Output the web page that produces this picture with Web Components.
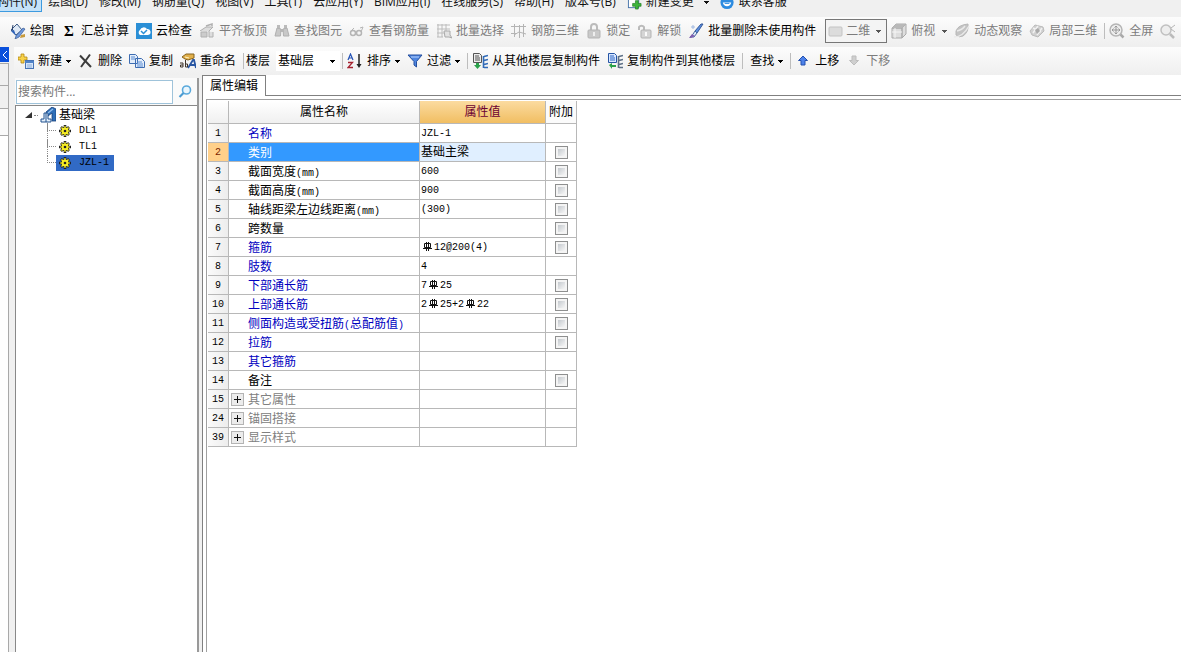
<!DOCTYPE html>
<html lang="zh-CN">
<head>
<meta charset="utf-8">
<title>属性编辑</title>
<style>
  body { margin: 0; background: #f0f0f0; color: #000; font: 12px/16px "Open Sans", "Noto Sans CJK SC", sans-serif; overflow-x: hidden; }
</style>
</head>
<body>
<rebar-app></rebar-app>
<script>
const ICONS = {
  paint: '<path d="M1 7 7 1l5 6-6 5z" fill="#dfe9f5" stroke="#3b5a86"/><path d="M3 2q-2 4 1 8" fill="none" stroke="#27406b"/><path d="M1 8 6 13 4 7z" fill="#2f62b8"/><path d="M6 13 13 5l2 1-6 8-4 2z" fill="#6f9ae0" stroke="#36588f" stroke-width=".7"/><path d="M11 12l4-1v3l-5 1z" fill="#c79a3c"/>',
  cloud: '<rect x="0" y="0" width="16" height="16" fill="#2b8fd6"/><path d="M4 12a3 3 0 0 1 0-5 4 4 0 0 1 7-1 3 3 0 0 1 1 6z" fill="#fff"/><path d="m5 8 2.500 2.500L11 7" fill="none" stroke="#2b8fd6" stroke-width="1.500"/>',
  slab: '<path d="M1 8 7 4h7l-4 4v6h4V9" fill="#ddd" stroke="#b0b0b0"/><path d="M2 9h6v5H2z" fill="#ccc" stroke="#b0b0b0"/><path d="M7 3l6-2v2" fill="none" stroke="#b0b0b0" stroke-width="1.500"/>',
  binoc: '<path d="M3 2h3v4H3zM10 2h3v4h-3zM6 6h4v3H6z" fill="#bbb"/><path d="M3 5 1 13h5.500L7 6zM13 5l2 8H9.500L9 6z" fill="#c8c8c8" stroke="#b0b0b0"/>',
  glasses: '<circle cx="4" cy="10" r="2.500" fill="none" stroke="#b5b5b5" stroke-width="1.500"/><circle cx="10" cy="10" r="2.500" fill="none" stroke="#b5b5b5" stroke-width="1.500"/><path d="M2 8 5 5M12 9l2-5-3 1" fill="none" stroke="#b5b5b5"/>',
  batch: '<path d="M1 2h13M1 6h13M1 10h8M1 14h6M2 1v13M6 1v13M10 1v7" fill="none" stroke="#bcbcbc"/><path d="M8 8h6v4l2 3-3-1H9z" fill="#e2e2e2" stroke="#aaa"/>',
  grid: '<path d="M0 3.500h15M0 10.500h5M3.500 1v13M8.500 2v13M12.500 1v13M3 12l5-3 7 2" fill="none" stroke="#b4b4b4"/>',
  lock: '<path d="M5 7V4a3 3 0 0 1 6 0v3" fill="none" stroke="#bbb" stroke-width="2"/><rect x="2" y="7" width="12" height="8" rx="1" fill="#c9c9c9" stroke="#b3b3b3"/><path d="M8 9v4" stroke="#eee" stroke-width="2"/>',
  unlock: '<path d="M2 7V4a3 3 0 0 1 5 0v3" fill="none" stroke="#bbb" stroke-width="2"/><rect x="4" y="7" width="10" height="8" rx="1" fill="#d5d5d5" stroke="#b3b3b3"/><path d="M9 9v4" stroke="#fafafa" stroke-width="2"/>',
  brush: '<path d="m7 8 6-7h2l-6 9z" fill="#5b8fe0" stroke="#35599a"/><path d="M7 8l2 2-3 4H2q3-2 5-6z" fill="#dfe8f8" stroke="#44679e"/><path d="M4 11l3 2-4 2H1z" fill="#8060b0"/><path d="M5 2v4M3 4h4" stroke="#9fb8e0"/>',
  flat: '<rect x="1" y="4" width="13" height="9" rx="1" fill="#dcdcdc" stroke="#c4c4c4"/>',
  cube: '<path d="M1 5 5 1h10l-4 4zM1 5h10v10H1zM11 5l4-4v10l-4 4z" fill="#dedede" stroke="#aaa"/><path d="M1 5h10l4-4H5z" fill="#b9b9b9"/><path d="M4 5v10M1 9h10" stroke="#f5f5f5"/>',
  orbit: '<path d="M2 8Q4 2 14 1q1 8-5 12-4 2-7-1z" fill="#c4c4c4" stroke="#b8b8b8"/><path d="M0 14q9 0 15-11M3 8q5-1 8-5" fill="none" stroke="#eaeaea" stroke-width="1.500"/>',
  local: '<path d="m1 8 5-6 8 2 1 4-6 6-6-2z" fill="#d0d0d0" stroke="#bbb"/><path d="M4 10l5-7M8 12l5-7M4 5l8 4" fill="none" stroke="#f2f2f2" stroke-width="1.500"/><path d="m6 7 3-2 2 3-3 3z" fill="#aaa"/>',
  full: '<circle cx="7" cy="7" r="6" fill="#eee" stroke="#b5b5b5" stroke-width="1.500"/><path d="M7 3v8M3 7h8M5.500 4.500 7 3l1.500 1.500M5.500 9.500 7 11l1.500-1.500M4.500 5.500 3 7l1.500 1.500M9.500 5.500 11 7 9.500 8.500" fill="none" stroke="#999"/><path d="m11.500 11.500 3 3" stroke="#aaa" stroke-width="2.500"/>',
  zoomout: '<circle cx="6" cy="7" r="5" fill="#eee" stroke="#c0c0c0" stroke-width="1.500"/><path d="m10 11 4 4" stroke="#bbb" stroke-width="2.500"/><path d="M11 5l4-3M11 6l4 3" stroke="#b5b5b5"/>',
  add: '<path d="M3 1h3v3h3v3H6v3H3V7H0V4h3z" fill="#f8d24a" stroke="#b28813" stroke-width=".8"/><rect x="7.500" y="7.500" width="8" height="8" fill="#d6e6fb" stroke="#4673b5"/><path d="M7 8h9v2H7z" fill="#4f82c8"/><path d="M9 12h5M9 14h5" stroke="#8cadd8"/>',
  del: '<path d="M2 2.500 13 14M12 1.500 3 14" stroke="#3c3c3c" stroke-width="2" fill="none"/>',
  copy: '<path d="M.5 1.500h6l2 2v7h-8zM6.500 5.500h6l3 3v6h-9z" fill="#e3edfa" stroke="#3e6db2"/><path d="M2 4h4M2 6h4M8 9h5M8 11h6M8 13h6" stroke="#5a8cd2"/>',
  rename: '<path d="M2 4 6 1h8v4l-6 2-3-1z" fill="#e2b04a" stroke="#866421"/><path d="M5 4l4 1" stroke="#fff3c4"/><path d="m8 15 5-8h1l2 8M10 12h5" fill="none" stroke="#2957a3" stroke-width="1.800"/><path d="M0 10h3v4H.5v-2H3M5.500 7v7h2v-3h-2" fill="none" stroke="#41352a"/>',
  sort: '<path d="m1 7 2.500-6L6 7M2 5h3" fill="none" stroke="#2452b5" stroke-width="1.200"/><path d="M1 9.500h4.500L1 14.500h5" fill="none" stroke="#a52330" stroke-width="1.300"/><path d="M12 1v12" stroke="#222" stroke-width="1.500"/><path d="M9.500 11h5L12 15z" fill="#222"/>',
  filter: '<path d="M1 2h14L9.500 8.500V14L7 12V8.500z" fill="#4f86e0" stroke="#244f9e"/><path d="M4 4h8" stroke="#b8d3ff"/>',
  from: '<path d="M1.500.5h6l2 2v7h-8z" fill="#ececec" stroke="#555"/><path d="M3 3h4M3 5h5M3 7h5" stroke="#555"/><path d="M4 10h3v2h2l-3.500 4L2 12h2z" fill="#2aa04a"/><path d="M11.500 3v12M16 2.500l-4 1M16 6.500l-4 1M16 10.500l-4 1M16 14.500h-4" fill="none" stroke="#316bb8" stroke-width="1.600"/>',
  to: '<path d="M1.500.5h6l2 2v7h-8z" fill="#d9e8ff" stroke="#2655a5"/><path d="M3 3h4M3 5h5M3 7h5" stroke="#2c64c4"/><path d="M2 12l3-2v2h4v2H5v2z" fill="#2aa04a"/><path d="M11.500 3v12M16 2.500l-4 1M16 6.500l-4 1M16 10.500l-4 1M16 14.500h-4" fill="none" stroke="#5c6f86" stroke-width="1.600"/>',
  up: '<path d="m8 3 4.500 4.500H10V12H6V7.500H3.500z" fill="#4d82ea" stroke="#2450ae"/>',
  down: '<path d="m8 12 4.500-4.500H10V3H6v4.500H3.500z" fill="#cfcfcf" stroke="#bdbdbd"/>',
  change: '<rect x="1.500" y="1.500" width="11" height="12" fill="#fff" stroke="#4672a8"/><path d="M9 6h3v3h3v3h-3v3H9v-3H6V9h3z" fill="#3eb53a" stroke="#1f7a20" stroke-width=".7"/>',
  service: '<circle cx="7.500" cy="8" r="7" fill="#2c8be0"/><path d="M3 8h9q-1 4-4.500 4T3 8" fill="#fff"/><path d="M5 9h5" stroke="#2c8be0"/>',
  search: '<circle cx="9.500" cy="6" r="4" fill="#eaf6fd" stroke="#5aa9dc" stroke-width="1.600"/><path d="m6.500 9-4 4" stroke="#4b9bd2" stroke-width="2.200"/>',
  beam: '<path d="M6 5 12 0l4 2v12h-4V6L8 9z" fill="#2f6fb8" stroke="#173f78" stroke-width=".8"/><path d="M4 6h4v6h3v3H1v-3h3z" fill="#e4f0fc" stroke="#22528f"/><path d="M6 6v9" stroke="#22528f"/><path d="m8 6 5-4" stroke="#91bfee" stroke-width="1.500"/>',
  gear: '<path d="M7 1v12M1 7h12M3 3l8 8M11 3l-8 8" stroke="#222" stroke-width="2.600"/><circle cx="7" cy="7" r="4" fill="#f7ee25" stroke="#222" stroke-width=".8"/><path d="M7 2v10M2 7h10M3.500 3.500l7 7M10.500 3.500l-7 7" stroke="#f7ee25" stroke-width="1.200"/><circle cx="7" cy="7" r="1.300" fill="#222"/>'
};
const svg = (name, size = 16, box = 16) => `<svg class="icon" width="${size}" height="${size}" viewBox="0 0 ${box} ${box}" aria-hidden="true">${ICONS[name]}</svg>`;
const ARROW = '<svg class="arrow" width="5" height="3" viewBox="0 0 5 3" aria-hidden="true"><path d="M0 0h5v1H4v1H3v1H2V2H1V1H0z" fill="currentColor"/></svg>';
const mono = s => s.replace(/[\x20-\x7e]+/g, '<span class="mono">$&</span>');
const MONO = '.mono { font: 10px/16px "Liberation Mono", monospace; white-space: pre; }';

class Base extends HTMLElement {
  connectedCallback() {
    if (this.shadowRoot) return;
    this.attachShadow({ mode: 'open' }).innerHTML = this.render();
  }
}

customElements.define('menu-item', class extends Base {
  render() {
    const icon = this.getAttribute('icon');
    return `<style>
      :host { display: block; flex: none; }
      button { display: flex; align-items: center; gap: 4px; height: 20px; padding: 0 4px; border: 1px solid transparent; background: none; font: inherit; color: #111; white-space: nowrap; }
      :host([active]) button { background: #c5e2f8; border-color: #3d9be0; }
      .arrow { margin-left: 6px; }
    </style><button type="button">${icon ? svg(icon, 15) : ''}<slot></slot>${this.hasAttribute('menu') ? ARROW : ''}</button>`;
  }
});

customElements.define('menu-strip', class extends Base {
  render() {
    return `<style>
      :host { display: block; height: 17px; overflow: hidden; background: #f0f0f0; }
      nav { display: flex; gap: 1px; margin: -8px 0 0 -8px; }
    </style><nav><slot></slot></nav>`;
  }
});

customElements.define('tool-strip', class extends Base {
  render() {
    return `<style>
      :host { display: flex; align-items: center; height: 28px; overflow: hidden; background: linear-gradient(#fcfcfc, #efefef); }
      :host([primary]) { border-bottom: 2px solid #efefef; padding-left: 10px; }
      :host([secondary]) { padding-left: 4px; }
    </style><slot></slot>`;
  }
});

customElements.define('tool-item', class extends Base {
  render() {
    const icon = this.getAttribute('icon');
    return `<style>
      :host { display: block; flex: none; margin-right: 7px; }
      button { display: flex; align-items: center; gap: 4px; padding: 0; border: 0; background: none; font: inherit; color: #000; white-space: nowrap; }
      button:disabled { color: #7c7c7c; }
      .plain { padding-left: 3px; }
      .sum { width: 16px; font: bold 15px/16px "Liberation Serif", serif; text-align: center; }
      :host([wide]) .arrow { margin-left: 3px; color: #555; }
    </style><button type="button" class="${icon ? '' : 'plain'}"${this.hasAttribute('disabled') ? ' disabled' : ''}>${icon === 'sum' ? '<span class="sum">Σ</span>' : icon ? svg(icon) : ''}<slot></slot>${this.hasAttribute('menu') ? ARROW : ''}</button>`;
  }
});

customElements.define('tool-separator', class extends Base {
  render() {
    return `<style>
      :host { display: block; flex: none; width: 1px; height: 16px; margin-right: 4px; background: #bdbdbd; }
      :host([tight]) { margin-right: 2px; }
    </style>`;
  }
});

customElements.define('tool-select', class extends Base {
  render() {
    const icon = this.getAttribute('icon');
    return `<style>
      :host { display: block; flex: none; margin-right: 2px; }
      label { display: flex; align-items: center; gap: 6px; }
      .box { display: grid; grid-template-columns: auto 15px; align-items: center; box-sizing: border-box; width: 64px; height: 20px; background: #fff; }
      select { grid-area: 1 / 1 / 2 / 3; appearance: none; width: 100%; height: 16px; margin: 0; padding: 0 0 0 2px; border: 0; background: none; font: inherit; color: #000; opacity: 1; }
      .arrow { grid-area: 1 / 2; pointer-events: none; justify-self: center; }
      .icon { grid-area: 1 / 1; margin-left: 2px; }
      :host([framed]) { margin: 0 4px 0 2px; }
      :host([framed]) .box { width: 62px; height: 24px; border: 1px solid #777; background: #f4f4f4; color: #555; }
      :host([framed]) select { padding-left: 20px; color: #7c7c7c; }
    </style><label>${this.getAttribute('label') || ''}<span class="box">${icon ? svg(icon) : ''}<select aria-label="${this.getAttribute('name')}"${icon ? ' disabled' : ''}><option>${this.getAttribute('value')}</option></select>${ARROW}</span></label>`;
  }
});

customElements.define('side-rail', class extends Base {
  render() {
    return `<style>
      :host { display: flex; flex-direction: column; width: 9px; flex: none; }
      button { height: 15px; padding: 0; border: 0; background: #0a50dc; color: #fff; display: grid; place-items: center; }
      div { box-sizing: border-box; height: 23px; border: solid #a9a9a9; border-width: 0 1px 1px 0; }
      .first { margin-top: 1px; border-top-width: 1px; }
      .pale { height: 27px; background: #fafafa; }
      .fill { flex: 1; background: #fff; border-bottom: 0; }
    </style><button type="button" aria-label="收起"><svg width="6" height="8" viewBox="0 0 6 8"><path d="M5 0 1 4l4 4" fill="none" stroke="#fff"/></svg></button>
    <div class="first"></div><div></div><div class="pale"></div><div class="fill"></div>`;
  }
});

customElements.define('component-tree', class extends Base {
  render() {
    return `<style>
      ${MONO}
      :host { display: flex; flex-direction: column; box-sizing: border-box; width: 184px; flex: none; border-right: 2px solid #999; margin-top: 3px; }
      form { display: flex; align-items: center; gap: 4px; height: 27px; padding-left: 1px; background: #fafafa; }
      input { box-sizing: border-box; width: 157px; height: 24px; padding: 0 1px; border: 1px solid #9fc3da; background: #fff; font: inherit; color: #000; outline: 0; }
      input::placeholder { color: #777; opacity: 1; }
      form button { display: grid; padding: 0; border: 0; background: none; }
      .tree { flex: 1; border: solid #888; border-width: 1px 0 0 1px; background: #fff; padding: 1px 0 0 9px; }
      ul { list-style: none; margin: 0; padding: 0; }
      .row { display: flex; align-items: center; height: 16px; }
      .root .icon { margin: 0 3px 0 2px; }
      .dots { width: 4px; border-top: 1px dotted #888; margin-left: 2px; }
      .kids { margin-left: 22px; }
      .kids li { display: flex; align-items: center; height: 16px; }
      .kids li::before { content: ""; width: 9px; height: 8px; border: dotted #888; border-width: 0 0 1px 1px; align-self: flex-start; box-sizing: border-box; }
      .branch { display: flex; align-items: center; gap: 7px; height: 16px; padding: 0 5px 0 2px; }
      .kids li:not(:last-child) { background: repeating-linear-gradient(#888 0 1px, transparent 1px 2px) 0 0 / 1px 100% no-repeat; }
      .on { background: #316ac5; }
    </style>
    <form><input type="text" aria-label="搜索构件" placeholder="搜索构件..."><button type="button" aria-label="搜索">${svg('search')}</button></form>
    <div class="tree"><ul><li><div class="row root"><svg width="7" height="7" viewBox="0 0 7 7"><path d="M7 0v6H0z" fill="#333"/></svg><span class="dots"></span>${svg('beam')}<span>基础梁</span></div>
      <ul class="kids">${['DL1', 'TL1', 'JZL-1'].map((t, i) => `<li><span class="branch${i === 2 ? ' on' : ''}">${svg('gear', 14, 14)}${mono(t)}</span></li>`).join('')}</ul></li></ul></div>`;
  }
});

const REBAR = '<svg class="rebar" width="13" height="9" viewBox="0 0 13 9" role="img" aria-label="HRB400"><path d="M3.500 1.500h6v4h-6zM5.500 0v9M7.500 0v9M2 6.500h9" fill="none" stroke="#111"/></svg>';
const ROWS = [
  [1, '名称', 'JZL-1', 0, 'key'], [2, '类别', '基础主梁', 1, 'sel'], [3, '截面宽度(mm)', '600', 1], [4, '截面高度(mm)', '900', 1],
  [5, '轴线距梁左边线距离(mm)', '(300)', 1], [6, '跨数量', '', 1], [7, '箍筋', '#12@200(4)', 1, 'key'], [8, '肢数', '4', 0, 'key'],
  [9, '下部通长筋', '7#25', 1, 'key'], [10, '上部通长筋', '2#25+2#22', 1, 'key'], [11, '侧面构造或受扭筋(总配筋值)', '', 1, 'key'],
  [12, '拉筋', '', 1, 'key'], [13, '其它箍筋', '', 0, 'key'], [14, '备注', '', 1], [15, '其它属性', '', 0, 'group'],
  [24, '锚固搭接', '', 0, 'group'], [39, '显示样式', '', 0, 'group']
];

customElements.define('property-grid', class extends Base {
  render() {
    const rows = ROWS.map(([n, name, value, check, kind = '']) => `<tr class="${kind}"><th scope="row">${mono(String(n))}</th><td><div class="name">${kind === 'group' ? `<button type="button" aria-label="展开${name}"><svg width="9" height="9" viewBox="0 0 9 9"><path d="M4.500 1v7M1 4.500h7" stroke="#111"/></svg></button>` : ''}<span class="label">${mono(name)}</span></div></td><td class="value">${value.split('#').map(mono).join(REBAR)}</td><td class="check">${check ? `<input type="checkbox" aria-label="附加 ${name}">` : ''}</td></tr>`).join('');
    return `<style>
      ${MONO}
      :host { display: block; }
      table { border-collapse: separate; border-spacing: 0; table-layout: fixed; width: 369px; }
      th, td { box-sizing: border-box; height: 19px; padding: 0; border: solid #b8b8b8; border-width: 0 1px 1px 0; line-height: 16px; font-weight: normal; white-space: nowrap; overflow: hidden; vertical-align: middle; }
      thead th { height: 23px; background: linear-gradient(#fff, #f0f0f0); }
      thead .hot { background: linear-gradient(#fbdba0, #f1be62); color: #6b0032; }
      thead .last { background: #fbfbfb; }
      tbody th { background: linear-gradient(90deg, #fafafa, #ededed); }
      .name { display: grid; grid-template-columns: 19px auto; align-items: center; height: 18px; }
      .label { grid-column: 2; grid-row: 1; padding-top: 2px; }
      .label .mono { line-height: 0; }
      .value { padding-left: 1px; }
      .key .name { color: #0000c0; }
      .group .name { color: #808080; }
      .sel th { background: #ffd08a; color: #7a1f00; }
      .sel td { background: #3399ff; }
      .sel .name { color: #fff; }
      .sel .value { background: #e0efff; }
      .sel .check { background: #fff; }
      .check { text-align: center; line-height: 0; }
      input { appearance: none; box-sizing: border-box; width: 13px; height: 13px; margin: 0; border: 1px solid #8e8f8f; background: linear-gradient(135deg, #c4c9ce, #f6f6f6) content-box, #f4f4f4; padding: 2px; vertical-align: middle; }
      .name button { grid-column: 1; grid-row: 1; display: grid; place-items: center; box-sizing: border-box; width: 13px; height: 13px; margin-left: 2px; padding: 0; border: 1px solid #b4b4b4; background: #ececec; }
      .rebar { vertical-align: -1px; }
    </style><table><colgroup><col style="width:21px"><col style="width:191px"><col style="width:126px"><col style="width:31px"></colgroup>
      <thead><tr><th></th><th scope="col">属性名称</th><th scope="col" class="hot">属性值</th><th scope="col" class="last">附加</th></tr></thead><tbody>${rows}</tbody></table>`;
  }
});

customElements.define('tab-panel', class extends Base {
  render() {
    return `<style>
      :host { display: flex; flex-direction: column; flex: 1; min-width: 0; margin-left: 3px; background: #fff; }
      .tabs { display: flex; height: 21px; }
      button { box-sizing: border-box; width: 64px; padding: 0; border: solid #808080; border-width: 1px 1px 0 1px; background: #fff; font: inherit; color: #000; }
      .rest { flex: 1; border-bottom: 1px solid #808080; }
      .outer { flex: 1; display: flex; border-left: 1px solid #808080; padding: 3px 0 0 3px; }
      .inner { flex: 1; border: solid #a0a0a0; border-width: 1px 0 0 1px; padding: 1px; }
    </style><div class="tabs" role="tablist"><button type="button" role="tab" aria-selected="true">${this.getAttribute('label')}</button><span class="rest"></span></div>
    <div class="outer" role="tabpanel"><div class="inner"><slot></slot></div></div>`;
  }
});

customElements.define('rebar-app', class extends Base {
  render() {
    return `<style>
      :host { display: flex; flex-direction: column; min-height: 100vh; }
      main { flex: 1; display: flex; }
      .work { flex: 1; min-width: 0; display: flex; flex-direction: column; margin-left: 5px; }
      .split { flex: 1; display: flex; margin-left: 1px; }
    </style>
    <menu-strip><menu-item active>构件(N)</menu-item><menu-item>绘图(D)</menu-item><menu-item>修改(M)</menu-item><menu-item>钢筋量(Q)</menu-item><menu-item>视图(V)</menu-item><menu-item>工具(T)</menu-item><menu-item>云应用(Y)</menu-item><menu-item>BIM应用(I)</menu-item><menu-item>在线服务(S)</menu-item><menu-item>帮助(H)</menu-item><menu-item>版本号(B)</menu-item><menu-item icon="change" menu>新建变更</menu-item><menu-item icon="service">联系客服</menu-item></menu-strip>
    <tool-strip primary><tool-item icon="paint">绘图</tool-item><tool-item icon="sum">汇总计算</tool-item><tool-item icon="cloud">云检查</tool-item><tool-item icon="slab" disabled>平齐板顶</tool-item><tool-item icon="binoc" disabled>查找图元</tool-item><tool-item icon="glasses" disabled>查看钢筋量</tool-item><tool-item icon="batch" disabled>批量选择</tool-item><tool-item icon="grid" disabled>钢筋三维</tool-item><tool-item icon="lock" disabled>锁定</tool-item><tool-item icon="unlock" disabled>解锁</tool-item><tool-item icon="brush">批量删除未使用构件</tool-item><tool-select framed icon="flat" name="视图模式" value="二维"></tool-select><tool-item icon="cube" disabled menu wide>俯视</tool-item><tool-item icon="orbit" disabled>动态观察</tool-item><tool-item icon="local" disabled>局部三维</tool-item><tool-separator></tool-separator><tool-item icon="full" disabled>全屏</tool-item><tool-item icon="zoomout" disabled></tool-item></tool-strip>
    <main><side-rail></side-rail>
      <div class="work">
        <tool-strip secondary><tool-item icon="add" menu>新建</tool-item><tool-item icon="del">删除</tool-item><tool-item icon="copy">复制</tool-item><tool-item icon="rename">重命名</tool-item><tool-separator tight></tool-separator><tool-select label="楼层" name="楼层" value="基础层"></tool-select><tool-separator></tool-separator><tool-item icon="sort" menu>排序</tool-item><tool-item icon="filter" menu>过滤</tool-item><tool-separator></tool-separator><tool-item icon="from">从其他楼层复制构件</tool-item><tool-item icon="to">复制构件到其他楼层</tool-item><tool-separator></tool-separator><tool-item menu>查找</tool-item><tool-separator></tool-separator><tool-item icon="up">上移</tool-item><tool-item icon="down" disabled>下移</tool-item></tool-strip>
        <div class="split"><component-tree></component-tree><tab-panel label="属性编辑"><property-grid></property-grid></tab-panel></div>
      </div>
    </main>`;
  }
});
</script>
</body>
</html>
